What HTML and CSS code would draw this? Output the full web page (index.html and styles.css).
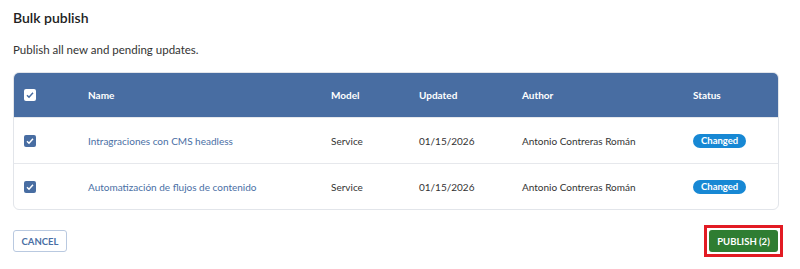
FILE: index.html
```html
<!DOCTYPE html>
<html lang="en">
<head>
    <meta charset="UTF-8">
    <meta name="viewport" content="width=device-width, initial-scale=1.0">
    <title>Bulk publish</title>
    <link rel="stylesheet" href="styles.css">
</head>
<body>
    <div class="dialog">
        <h2 class="title">Bulk publish</h2>
        <p class="intro">Publish all new and pending updates.</p>

        <div class="table">
            <div class="row head">
                <div class="cell check"><span class="box light"><svg viewBox="0 0 12 12"><path d="M3 6.2l2 2 4-4.4"/></svg></span></div>
                <div class="cell">Name</div>
                <div class="cell">Model</div>
                <div class="cell">Updated</div>
                <div class="cell">Author</div>
                <div class="cell">Status</div>
            </div>
            <div class="row">
                <div class="cell check"><span class="box"><svg viewBox="0 0 12 12"><path d="M3 6.2l2 2 4-4.4"/></svg></span></div>
                <div class="cell"><a href="#" class="link">Intragraciones con CMS headless</a></div>
                <div class="cell">Service</div>
                <div class="cell">01/15/2026</div>
                <div class="cell">Antonio Contreras Román</div>
                <div class="cell"><span class="badge">Changed</span></div>
            </div>
            <div class="row">
                <div class="cell check"><span class="box"><svg viewBox="0 0 12 12"><path d="M3 6.2l2 2 4-4.4"/></svg></span></div>
                <div class="cell"><a href="#" class="link">Automatización de flujos de contenido</a></div>
                <div class="cell">Service</div>
                <div class="cell">01/15/2026</div>
                <div class="cell">Antonio Contreras Román</div>
                <div class="cell"><span class="badge">Changed</span></div>
            </div>
        </div>

        <div class="actions">
            <button class="btn btn-outline">CANCEL</button>
            <span class="highlight"><button class="btn btn-green">PUBLISH (2)</button></span>
        </div>
    </div>
</body>
</html>
```

FILE: styles.css
```css
body {
    margin: 0;
    font-family: Lato, "Open Sans", Arial, sans-serif;
    background-color: white;
    color: #333;
}

.dialog {
    padding: 8px 21px 0 13px;
}

.title {
    margin: 0;
    font-size: 14px;
    font-weight: 600;
    line-height: 20px;
    color: #222;
}

.intro {
    margin: 12px 0 12px;
    font-size: 11.5px;
    line-height: 20px;
    color: #333;
}

.table {
    border: 1px solid #e2e5ea;
    border-radius: 6px;
    overflow: hidden;
}

.row {
    display: grid;
    grid-template-columns: 74px 243px 88px 103px 171px 1fr;
    height: 45px;
    align-items: center;
    font-size: 10px;
    border-top: 1px solid #e6e8ec;
}

.row.head {
    height: 44px;
    border-top: none;
    background-color: #486da2;
    color: white;
    font-weight: 700;
}

.cell.check {
    padding-left: 10px;
}

.box {
    display: flex;
    width: 12px;
    height: 12px;
    border-radius: 2px;
    background-color: #486da2;
}

.box svg {
    width: 12px;
    height: 12px;
    fill: none;
    stroke: white;
    stroke-width: 1.5;
}

.box.light {
    background-color: white;
}

.box.light svg {
    stroke: #486da2;
}

.link {
    color: #4a6fa5;
    text-decoration: none;
}

.badge {
    display: inline-block;
    padding: 0 8px;
    height: 14px;
    line-height: 14px;
    border-radius: 7px;
    background-color: #1788d4;
    color: white;
    font-size: 9.5px;
    font-weight: 700;
}

.actions {
    display: flex;
    justify-content: space-between;
    align-items: center;
    margin-top: 15px;
}

.btn {
    font-family: inherit;
    font-size: 9.5px;
    font-weight: 700;
    border-radius: 3px;
    cursor: pointer;
}

.btn-outline {
    width: 54px;
    height: 22px;
    padding: 0;
    background-color: white;
    border: 1px solid #b9c9e0;
    color: #4a6fa5;
}

.highlight {
    display: flex;
    padding: 2px;
    border: 3px solid #e21b23;
    margin-right: -4px;
}

.btn-green {
    width: 69px;
    height: 22px;
    padding: 0;
    border: none;
    background-color: #2f7d32;
    color: white;
}
```
